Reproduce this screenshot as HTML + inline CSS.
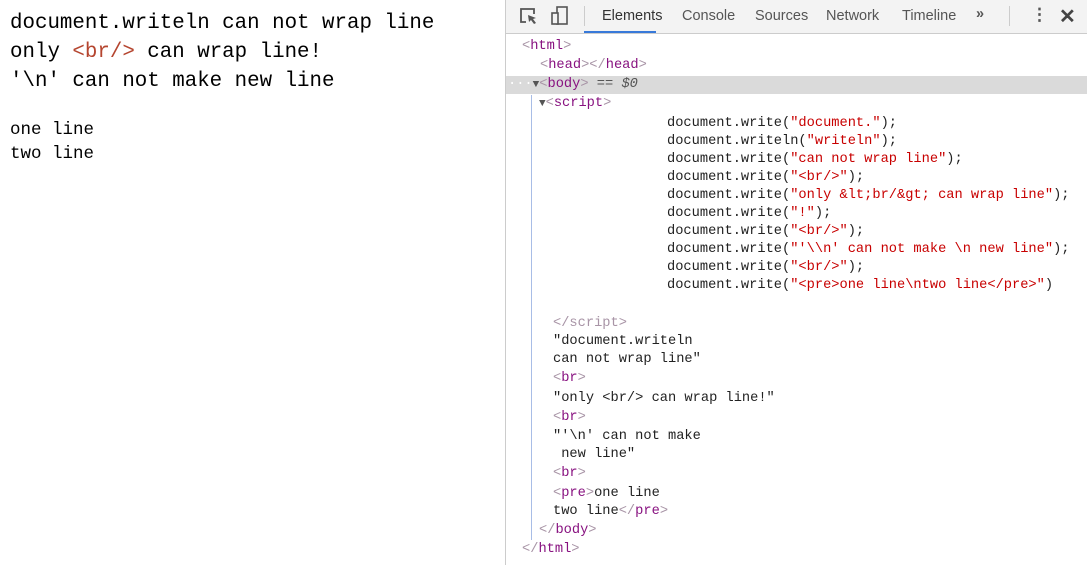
<!DOCTYPE html>
<html><head><meta charset="utf-8"><style>
body{margin:0;width:1087px;height:565px;overflow:hidden;background:#fff;position:relative;font-family:"Liberation Mono",monospace}
.l{position:absolute;white-space:pre;color:#000}
.big{font-size:20.8px;left:10px;font-family:"Liberation Mono","Noto Serif CJK SC",monospace}
.sm{font-size:17.5px;left:10px}
#dt{position:absolute;left:505px;top:0;width:582px;height:565px;border-left:1px solid #ccc;background:#fff}
#tb{position:absolute;left:0;top:0;width:582px;height:33px;background:#f3f3f3;border-bottom:1px solid #ccc;font-family:"Liberation Sans",sans-serif;font-size:14.5px;color:#333}
#tb span{position:absolute;top:8px}
.d{position:absolute;white-space:pre;font-size:13.7px;height:18px;line-height:18px;color:#222}
.t{color:#881280}.b{color:#a894a6}.s{color:#c80000}
</style></head><body>
<div class="l big" style="top:12px">document.writeln can not wrap line</div>
<div class="l big" style="top:41px">only <span style="color:#b5452f">&lt;br/&gt;</span> can wrap line!</div>
<div class="l big" style="top:70px">'\n' can not make new line</div>
<div class="l sm" style="top:120px">one line</div>
<div class="l sm" style="top:144px">two line</div>

<div id="dt">
<div id="tb">
<svg style="position:absolute;left:13px;top:7px" width="20" height="20" viewBox="0 0 20 20"><path d="M7 15H2V2h13v5" fill="none" stroke="#555" stroke-width="1.8"/><path d="M9 8l8 3-3 1 3 4-2 1-3-4-2 2z" fill="#555"/></svg>
<svg style="position:absolute;left:45px;top:6px" width="18" height="20" viewBox="0 0 18 20"><rect x="6" y="1" width="10" height="17" fill="none" stroke="#555" stroke-width="1.6"/><rect x="1" y="7" width="6" height="11" fill="#f3f3f3" stroke="#555" stroke-width="1.6"/></svg>
<div style="position:absolute;left:78px;top:6px;width:1px;height:20px;background:#ccc"></div>
<span style="left:96px;color:#333">Elements</span>
<div style="position:absolute;left:78px;top:31px;width:72px;height:2px;background:#3879d9"></div>
<span style="left:176px;color:#555">Console</span>
<span style="left:249px;color:#555">Sources</span>
<span style="left:320px;color:#555">Network</span>
<span style="left:396px;color:#555">Timeline</span>
<span style="left:470px;color:#555;font-weight:bold;top:6px">»</span>
<div style="position:absolute;left:503px;top:6px;width:1px;height:20px;background:#ccc"></div>
<span style="left:525px;top:5px;color:#555;font-weight:bold;font-size:17px">⋮</span>
<span style="left:553px;top:4px;color:#444;font-size:20px;font-weight:bold">✕</span>
</div>
<div style="position:absolute;left:0;top:76px;width:582px;height:18px;background:#dadada"></div>
<div style="position:absolute;left:25px;top:95px;width:1px;height:445px;background:#a8bde6"></div>
</div>

<div class="d" style="left:522px;top:38px"><span class="b">&lt;</span><span class="t">html</span><span class="b">&gt;</span></div>
<div class="d" style="left:540px;top:57px"><span class="b">&lt;</span><span class="t">head</span><span class="b">&gt;&lt;/</span><span class="t">head</span><span class="b">&gt;</span></div>
<div class="d" style="left:508px;top:76px"><span style="color:#fff">···</span><span style="color:#555;font-size:11px">▼</span><span class="b">&lt;</span><span class="t">body</span><span class="b">&gt;</span> <span style="color:#555">== <i>$0</i></span></div>
<div class="d" style="left:539px;top:95px"><span style="color:#555;font-size:11px">▼</span><span class="b">&lt;</span><span class="t">script</span><span class="b">&gt;</span></div>
<div class="d" style="left:667px;top:115px">document.write(<span class="s">"document."</span>);</div>
<div class="d" style="left:667px;top:133px">document.writeln(<span class="s">"writeln"</span>);</div>
<div class="d" style="left:667px;top:151px">document.write(<span class="s">"can not wrap line"</span>);</div>
<div class="d" style="left:667px;top:169px">document.write(<span class="s">"&lt;br/&gt;"</span>);</div>
<div class="d" style="left:667px;top:187px">document.write(<span class="s">"only &amp;lt;br/&amp;gt; can wrap line"</span>);</div>
<div class="d" style="left:667px;top:205px">document.write(<span class="s">"!"</span>);</div>
<div class="d" style="left:667px;top:223px">document.write(<span class="s">"&lt;br/&gt;"</span>);</div>
<div class="d" style="left:667px;top:241px">document.write(<span class="s">"'\\n' can not make \n new line"</span>);</div>
<div class="d" style="left:667px;top:259px">document.write(<span class="s">"&lt;br/&gt;"</span>);</div>
<div class="d" style="left:667px;top:277px">document.write(<span class="s">"&lt;pre&gt;one line\ntwo line&lt;/pre&gt;"</span>)</div>
<div class="d" style="left:553px;top:315px"><span class="b">&lt;/script&gt;</span></div>
<div class="d" style="left:553px;top:333px">"document.writeln</div>
<div class="d" style="left:553px;top:351px">can not wrap line"</div>
<div class="d" style="left:553px;top:370px"><span class="b">&lt;</span><span class="t">br</span><span class="b">&gt;</span></div>
<div class="d" style="left:553px;top:390px">"only &lt;br/&gt; can wrap line!"</div>
<div class="d" style="left:553px;top:409px"><span class="b">&lt;</span><span class="t">br</span><span class="b">&gt;</span></div>
<div class="d" style="left:553px;top:428px">"'\n' can not make</div>
<div class="d" style="left:553px;top:446px"> new line"</div>
<div class="d" style="left:553px;top:465px"><span class="b">&lt;</span><span class="t">br</span><span class="b">&gt;</span></div>
<div class="d" style="left:553px;top:485px"><span class="b">&lt;</span><span class="t">pre</span><span class="b">&gt;</span>one line</div>
<div class="d" style="left:553px;top:503px">two line<span class="b">&lt;/</span><span class="t">pre</span><span class="b">&gt;</span></div>
<div class="d" style="left:539px;top:522px"><span class="b">&lt;/</span><span class="t">body</span><span class="b">&gt;</span></div>
<div class="d" style="left:522px;top:541px"><span class="b">&lt;/</span><span class="t">html</span><span class="b">&gt;</span></div>
</body></html>
